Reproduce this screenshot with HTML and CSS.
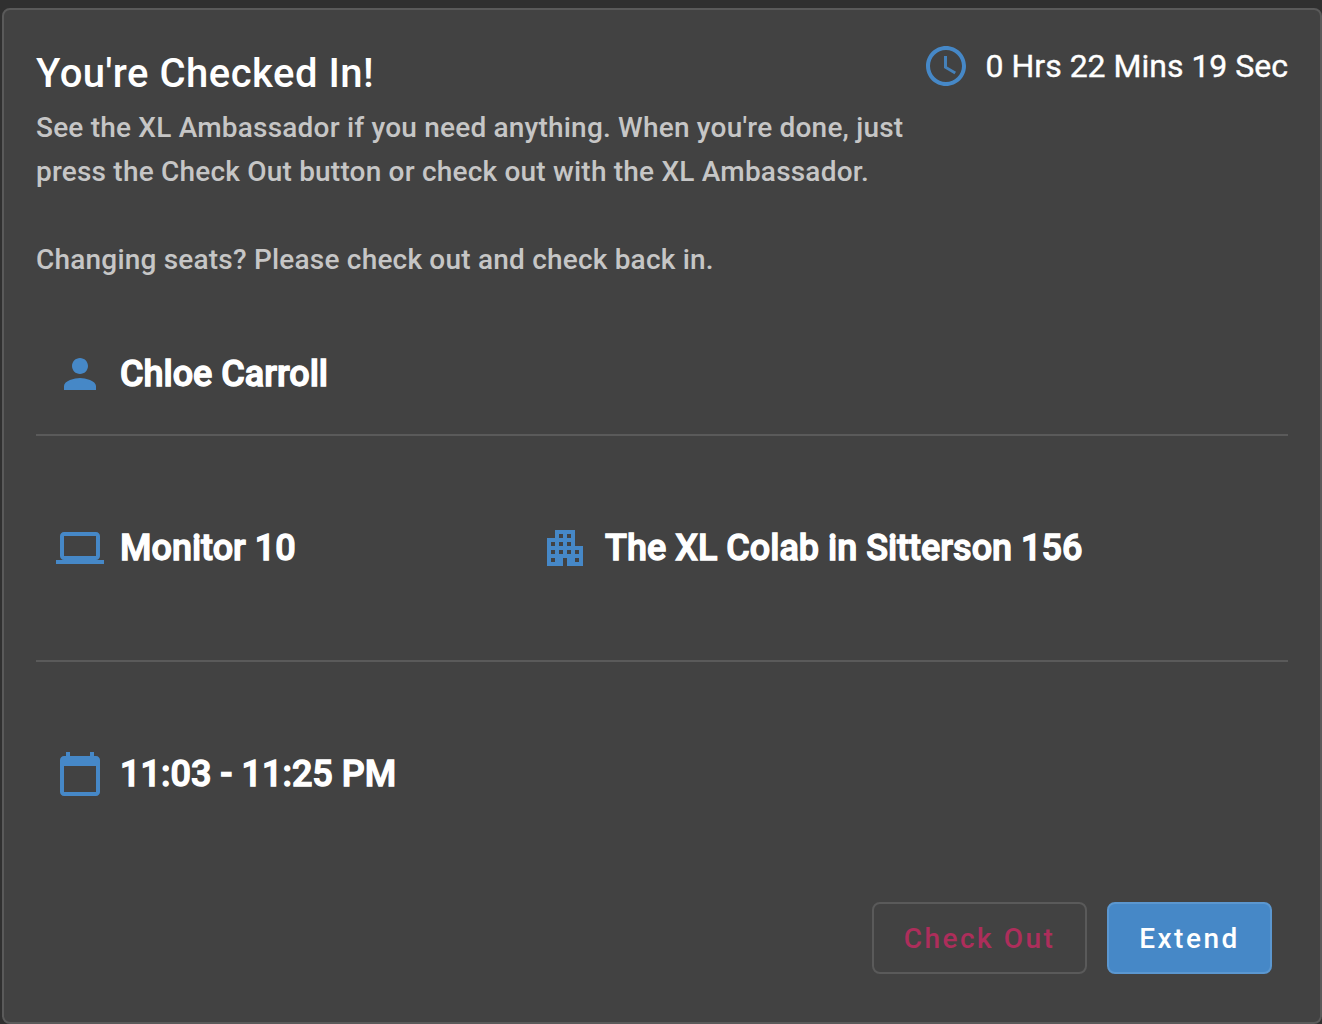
FILE: index.html
```html
<!DOCTYPE html>
<html lang="en">
<head>
<meta charset="utf-8">
<title>Checked In</title>
<link rel="stylesheet" href="styles.css">
</head>
<body>
<main class="card">
  <header class="header">
    <div class="intro">
      <h1 class="title">You're Checked In!</h1>
      <p class="description">See the XL Ambassador if you need anything. When you're done, just<br>press the Check Out button or check out with the XL Ambassador.</p>
      <p class="description note">Changing seats? Please check out and check back in.</p>
    </div>
    <div class="timer">
      <svg class="icon" viewBox="0 0 24 24"><path d="M11.99 2C6.47 2 2 6.48 2 12s4.47 10 9.99 10C17.52 22 22 17.52 22 12S17.52 2 11.99 2zM12 20c-4.42 0-8-3.58-8-8s3.58-8 8-8 8 3.580 8 8-3.580 8-8 8z"/><path opacity=".9" d="M12.500 7H11v6l5.250 3.150.750-1.230-4.500-2.670z"/></svg>
      <span class="elapsed">0 Hrs 22 Mins 19 Sec</span>
    </div>
  </header>
  <section class="row person">
    <div class="item">
      <svg class="icon" viewBox="0 0 24 24"><path d="M12 12c2.210 0 4-1.790 4-4s-1.790-4-4-4-4 1.790-4 4 1.790 4 4 4zm0 2c-2.670 0-8 1.340-8 4v2h16v-2c0-2.660-5.330-4-8-4z"/></svg>
      <span class="label">Chloe Carroll</span>
    </div>
  </section>
  <section class="row place">
    <div class="item">
      <svg class="icon" viewBox="0 0 24 24"><path d="M20 18c1.100 0 1.990-.9 1.990-2L22 6c0-1.100-.9-2-2-2H4c-1.100 0-2 .9-2 2v10c0 1.100.9 2 2 2H0v2h24v-2h-4zM4 6h16v10H4V6z"/></svg>
      <span class="label">Monitor 10</span>
    </div>
    <div class="item">
      <svg class="icon" viewBox="0 0 24 24"><path d="M17 11V3H7v4H3v14h8v-4h2v4h8V11h-4zM7 19H5v-2h2v2zm0-4H5v-2h2v2zm0-4H5V9h2v2zm4 4H9v-2h2v2zm0-4H9V9h2v2zm0-4H9V5h2v2zm4 8h-2v-2h2v2zm0-4h-2V9h2v2zm0-4h-2V5h2v2zm4 12h-2v-2h2v2zm0-4h-2v-2h2v2z"/></svg>
      <span class="label">The XL Colab in Sitterson 156</span>
    </div>
  </section>
  <section class="row time">
    <div class="item">
      <svg class="icon" viewBox="0 0 24 24"><path d="M20 3h-1V1h-2v2H7V1H5v2H4c-1.100 0-2 .9-2 2v16c0 1.100.9 2 2 2h16c1.100 0 2-.9 2-2V5c0-1.100-.9-2-2-2zm0 18H4V8h16v13z"/></svg>
      <span class="label">11:03 - 11:25 PM</span>
    </div>
  </section>
  <footer class="actions">
    <button class="button checkout" type="button">Check Out</button>
    <button class="button extend" type="button">Extend</button>
  </footer>
</main>
</body>
</html>
```
FILE: styles.css
```css
* { box-sizing: border-box; }
body {
  margin: 0;
  padding: 8px 0 0 2px;
  background: #303030;
  color: #fff;
  font-family: Roboto, sans-serif;
}
.card {
  height: 1016px;
  padding: 32px;
  background: #424242;
  border: 2px solid #5a5a5a;
  border-radius: 8px;
}
.header {
  display: flex;
  justify-content: space-between;
  height: 272px;
}
.title {
  margin: 0;
  font-size: 40px;
  font-weight: 500;
  line-height: 64px;
  letter-spacing: 0.5px;
}
.description {
  margin: 0;
  color: #c6c6c6;
  font-size: 28px;
  font-weight: 500;
  line-height: 44px;
  letter-spacing: 0.2px;
  white-space: nowrap;
}
.note { margin-top: 44px; }
.timer {
  display: flex;
  align-items: center;
  gap: 16px;
  height: 48px;
}
.elapsed {
  font-size: 32px;
  line-height: 48px;
  white-space: nowrap;
  -webkit-text-stroke: 0.4px #fff;
}
.icon {
  flex: none;
  width: 48px;
  height: 48px;
  fill: #4688c7;
}
.row {
  display: grid;
  grid-template-columns: 485px 1fr;
  align-items: center;
  height: 224px;
  padding-left: 20px;
}
.person { height: 120px; }
.person, .place {
  box-sizing: content-box;
  border-bottom: 2px solid #5a5a5a;
}
.item {
  display: flex;
  align-items: center;
  gap: 16px;
}
.label {
  font-size: 36px;
  font-weight: 500;
  line-height: 48px;
  white-space: nowrap;
  -webkit-text-stroke: 1.3px #fff;
}
.actions {
  display: flex;
  justify-content: flex-end;
  gap: 20px;
  padding: 16px 16px 0 0;
}
.button {
  height: 72px;
  padding: 0;
  border: 2px solid #5a5a5a;
  border-radius: 8px;
  background: transparent;
  font: 500 28px Roboto, sans-serif;
  letter-spacing: 2.5px;
}
.checkout { width: 215px; color: #ad2e5b; }
.extend {
  width: 165px;
  color: #fff;
  background: #4688c7;
  border-color: #5b97d0;
}
```
